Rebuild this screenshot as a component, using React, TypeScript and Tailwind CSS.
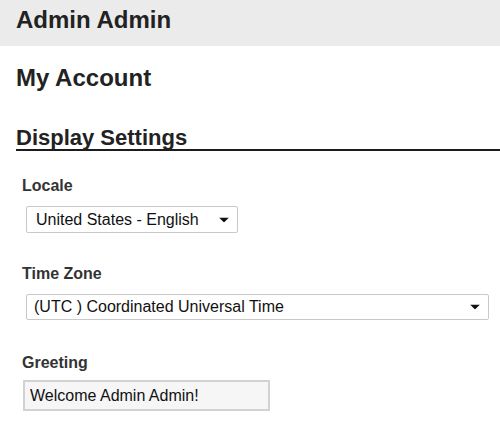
import { useState } from "react";

const FONT = { fontFamily: '"Liberation Sans", Arial, sans-serif' };

function Caret() {
  return (
    <svg
      className="pointer-events-none absolute top-1/2 right-[9px] -translate-y-1/2"
      width="10"
      height="5"
      viewBox="0 0 10 5"
    >
      <path d="M0 0h10L5 5z" fill="#111" />
    </svg>
  );
}

export default function App() {
  const [locale, setLocale] = useState("en_US");
  const [zone, setZone] = useState("UTC");
  const [greeting, setGreeting] = useState("Welcome Admin Admin!");

  return (
    <div className="min-h-screen bg-white text-[#222]" style={FONT}>
      <header className="h-[46px] bg-[#ebebeb] pl-4 pt-[8px]">
        <h1 className="text-[24px] font-bold leading-[24px] text-[#222]">Admin Admin</h1>
      </header>

      <main className="pl-4">
        <h2 className="mt-[20px] text-[24px] font-bold leading-[24px] text-[#222]">My Account</h2>

        <h3 className="mt-[37px] border-b-2 border-[#1c1c1c] text-[22px] font-bold leading-[22px] text-[#222]">
          Display Settings
        </h3>

        <div className="pl-[6px]">
          <label className="mt-[27px] block text-[16px] font-bold leading-[16px] text-[#333]">Locale</label>
          <div className="relative mt-[12px] ml-[4px] w-[212px]">
            <select
              value={locale}
              onChange={(e) => setLocale(e.target.value)}
              className="block h-[27px] w-full appearance-none rounded-[2px] border border-[#c9c9c9] bg-white pl-[9px] text-[16px] leading-[16px] text-[#111] outline-none"
            >
              <option value="en_US">United States - English</option>
              <option value="en_GB">United Kingdom - English</option>
            </select>
            <Caret />
          </div>

          <label className="mt-[33px] block text-[16px] font-bold leading-[16px] text-[#333]">Time Zone</label>
          <div className="relative mt-[12px] ml-[4px] w-[463px]">
            <select
              value={zone}
              onChange={(e) => setZone(e.target.value)}
              className="block h-[26px] w-full appearance-none rounded-[2px] border border-[#c9c9c9] bg-white pl-[7px] text-[16px] leading-[16px] text-[#111] outline-none"
            >
              <option value="UTC">(UTC ) Coordinated Universal Time</option>
            </select>
            <Caret />
          </div>

          <label className="mt-[35px] block text-[16px] font-bold leading-[16px] text-[#333]">Greeting</label>
          <input
            value={greeting}
            onChange={(e) => setGreeting(e.target.value)}
            className="mt-[9px] ml-[1px] block h-[31px] w-[247px] border-2 border-[#d2d2d2] bg-[#f6f6f6] pl-[5px] text-[16px] leading-[16px] text-[#111] outline-none"
          />
        </div>
      </main>
    </div>
  );
}
